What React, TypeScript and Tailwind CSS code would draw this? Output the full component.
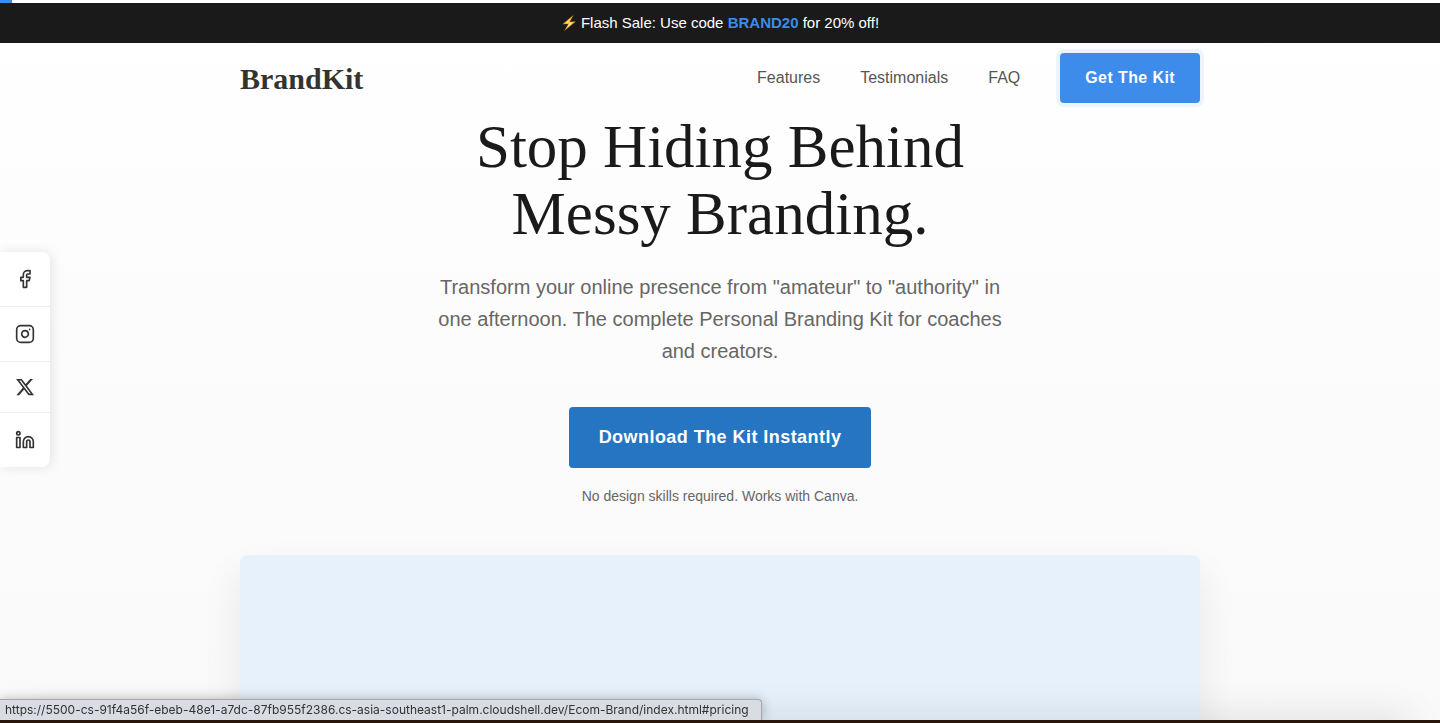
import { Facebook, Instagram, Linkedin } from "lucide-react";
import { FaXTwitter } from "react-icons/fa6";

// ─── Data ─────────────────────────────────────────────────────────────────────

const navLinks = [
  { label: "Features", href: "#features" },
  { label: "Testimonials", href: "#testimonials" },
  { label: "FAQ", href: "#faq" },
];

const socialLinks = [
  { label: "Facebook", href: "#facebook", icon: <Facebook className="size-5" />, padding: "py-[17px]" },
  { label: "Instagram", href: "#instagram", icon: <Instagram className="size-5" />, padding: "py-[17px]" },
  { label: "X", href: "#x", icon: <FaXTwitter className="size-5" />, padding: "py-[15px]" },
  { label: "LinkedIn", href: "#linkedin", icon: <Linkedin className="size-5" />, padding: "py-[17px]" },
];

// ─── Sections ─────────────────────────────────────────────────────────────────

function PromoBar() {
  return (
    <div className="flex h-10 items-center justify-center gap-1 bg-[#1a1a1a] text-[15px] font-medium text-white">
      <svg viewBox="0 0 16 18" className="h-[18px] w-4" aria-hidden="true">
        <path d="M12.5 1 1.5 10.2l5.8-.3L3.2 17 14.8 7.4l-6 .3z" fill="#f9a825" />
        <path d="M11 3 4.5 9.2l4-.3-2.8 5L12 8.4l-5 .2z" fill="#ffe9a0" />
      </svg>
      <p>
        Flash Sale: Use code <strong className="font-bold text-[#3d8bea]">BRAND20</strong> for 20% off!
      </p>
    </div>
  );
}

function Header() {
  return (
    <header className="px-5">
      <div className="mx-auto flex h-[70px] max-w-[960px] items-center justify-between">
        <a href="#top" className="font-serif text-[30px] font-bold text-[#333]">
          BrandKit
        </a>
        <nav className="flex items-center gap-10 text-base text-[#555]">
          {navLinks.map((link) => (
            <a key={link.href} href={link.href}>
              {link.label}
            </a>
          ))}
          <a
            href="#pricing"
            className="rounded bg-[#3d8bea] px-[25px] py-[13px] font-bold tracking-wide text-white shadow-[0_0_0_4px_#edf4fd]"
          >
            Get The Kit
          </a>
        </nav>
      </div>
    </header>
  );
}

function Hero() {
  return (
    <main className="px-5 text-center">
      <h1 className="mx-auto max-w-[700px] font-serif text-[61px] leading-[67px] text-[#1a1a1a]">
        Stop Hiding Behind
        <br />
        Messy Branding.
      </h1>
      <p className="mx-auto mt-6 max-w-[590px] text-xl leading-8 text-[#666]">
        Transform your online presence from "amateur" to "authority" in one afternoon. The complete
        Personal Branding Kit for coaches and creators.
      </p>
      <button
        type="button"
        className="mt-10 rounded bg-[#2575c2] px-[30px] py-4 text-lg leading-[29px] font-bold tracking-wide text-white"
      >
        Download The Kit Instantly
      </button>
      <p className="mt-4 text-sm leading-6 text-[#666]">No design skills required. Works with Canva.</p>
      <div className="mx-auto mt-[47px] h-[500px] max-w-[960px] rounded-lg bg-[#e7f1fc] shadow-[0_20px_40px_rgba(0,0,0,0.08)]" />
    </main>
  );
}

function SocialSidebar() {
  return (
    <aside className="fixed top-[252px] left-0 w-[50px] overflow-hidden rounded-r-lg bg-white text-[#333] shadow-[2px_0_12px_rgba(0,0,0,0.1)]">
      {socialLinks.map((link) => (
        <a
          key={link.label}
          href={link.href}
          aria-label={link.label}
          className={`flex justify-center border-b border-[#eee] last:border-b-0 ${link.padding}`}
        >
          {link.icon}
        </a>
      ))}
    </aside>
  );
}

// ─── Page ─────────────────────────────────────────────────────────────────────

export default function App() {
  return (
    <div
      id="top"
      className="h-screen overflow-hidden bg-linear-to-b from-white to-[#f9f9f9] font-['Liberation_Sans',Arial,sans-serif] [&_.font-serif]:font-['Liberation_Serif',Georgia,serif]"
    >
      {/* Scroll progress */}
      <div className="h-[3px]">
        <div className="h-full w-3 bg-[#3d8bea]" />
      </div>
      <PromoBar />
      <Header />
      <Hero />
      <SocialSidebar />

      {/* Shadow rising from below the window */}
      <div className="fixed inset-x-8 top-full h-5 shadow-[0_0_40px_rgba(0,0,0,0.18)]" />

      {/* Link address bubble */}
      <div className="fixed bottom-[3px] left-0 rounded-tr border-t border-r border-[#a3a6ab] bg-[#d9dce3] pr-3 pl-[5px] font-['Inter',sans-serif] text-xs leading-5 text-[#333] shadow-[0_0_12px_rgba(0,0,0,0.25)]">
        https://5500-cs-91f4a56f-ebeb-48e1-a7dc-87fb955f2386.cs-asia-southeast1-palm.cloudshell.dev/Ecom-Brand/index.html#pricing
      </div>
      <div className="fixed inset-x-0 bottom-0 h-[3px] bg-[#2a150b]" />
    </div>
  );
}
